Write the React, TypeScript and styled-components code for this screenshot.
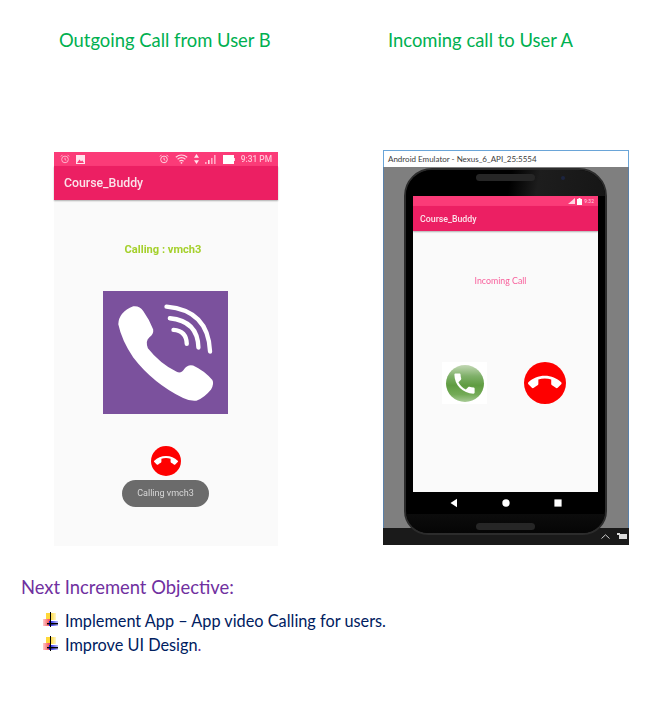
import React from "react";
import styled, { createGlobalStyle } from "styled-components";

const Global = createGlobalStyle`
  html, body { margin: 0; padding: 0; background: #fff; }
  #root { width: 668px; height: 710px; overflow: hidden; }
`;

const Page = styled.main`
  width: 668px;
  height: 710px;
  background: #fff;
  font-family: Lato, "Open Sans", sans-serif;
`;

const TitleRow = styled.div`
  display: grid;
  grid-template-columns: 329px 1fr;
  padding: 28px 0 0 59px;
  height: 150px;
  box-sizing: border-box;
`;

const Title = styled.h2`
  margin: 0;
  font-size: 18.4px;
  line-height: 24px;
  font-weight: 400;
  color: #00b050;
`;

const ShotRow = styled.div`
  display: flex;
  align-items: flex-start;
  padding-left: 54px;
  gap: 105px;
`;

/* ---------- left screenshot ---------- */

const LeftShot = styled.section`
  width: 224px;
  height: 394px;
  margin-top: 2px;
  display: flex;
  flex-direction: column;
  background: #fafafa;
  font-family: Roboto, sans-serif;
`;

const StatusBar = styled.div<{ $h: number }>`
  height: ${(p) => p.$h}px;
  flex: none;
  display: flex;
  align-items: center;
  gap: 6px;
  padding: 0 6px;
  background: #fb3b78;
  color: #ffd0de;
`;

const StatusSpacer = styled.div`
  flex: 1;
`;

const StatusClock = styled.span`
  font-size: 8.4px;
  font-weight: 500;
  color: #ffc4d6;
  filter: blur(0.3px);
`;

const AppBar = styled.header<{ $h: number; $size: number; $pad: number }>`
  height: ${(p) => p.$h}px;
  flex: none;
  display: flex;
  align-items: center;
  padding-left: ${(p) => p.$pad}px;
  background: #ec1f63;
  color: #fbe3ea;
  font-size: ${(p) => p.$size}px;
  font-weight: 500;
  box-shadow: 0 1px 1.5px rgba(0, 0, 0, 0.3);
  filter: blur(0.25px);
`;

const CallBody = styled.div`
  flex: 1;
  display: flex;
  flex-direction: column;
  align-items: center;
  padding-top: 42px;
`;

const CallingText = styled.div`
  height: 16px;
  line-height: 16px;
  margin-right: 6px;
  font-size: 11.1px;
  font-weight: 700;
  color: #a5d02c;
  filter: blur(0.25px);
`;

const ViberTile = styled.div`
  width: 125px;
  height: 123px;
  margin-top: 33px;
  margin-right: 1px;
  background: #7b519d;
  filter: blur(0.3px);
  svg {
    display: block;
    width: 100%;
    height: 100%;
  }
`;

const RoundButton = styled.div<{ $size: number }>`
  width: ${(p) => p.$size}px;
  height: ${(p) => p.$size}px;
  flex: none;
  border-radius: 50%;
  background: #fe0000;
  display: flex;
  align-items: center;
  justify-content: center;
  svg {
    width: 80%;
    height: 80%;
    fill: #fff;
  }
`;

const HangupSlot = styled.div`
  margin-top: 32px;
`;

const Toast = styled.div`
  width: 87px;
  height: 27px;
  margin-top: 4px;
  margin-right: 1px;
  border-radius: 14px;
  background: #6b6b6b;
  color: #d8d8d8;
  font-size: 9px;
  line-height: 27px;
  text-align: center;
  filter: blur(0.25px);
`;

/* ---------- right screenshot ---------- */

const EmulatorWindow = styled.section`
  width: 246px;
  height: 395px;
  display: flex;
  flex-direction: column;
  box-sizing: border-box;
  font-family: Roboto, sans-serif;
`;

const WindowTitle = styled.div`
  height: 17px;
  flex: none;
  box-sizing: border-box;
  border: 1px solid #6aa5d8;
  border-bottom: none;
  background: #fff;
  padding-left: 4px;
  font-family: Lato, sans-serif;
  font-size: 8px;
  line-height: 16px;
  color: #3c3c3c;
  white-space: nowrap;
`;

const Stage = styled.div`
  height: 361px;
  flex: none;
  background: #7f7f7f;
  border-left: 1px solid #5a80a8;
  border-right: 1px solid #5a80a8;
  box-sizing: border-box;
  display: flex;
  justify-content: center;
  padding-right: 1px;
`;

const PhoneBody = styled.div`
  position: relative;
  z-index: 1;
  width: 203px;
  height: 367px;
  margin-top: 1px;
  flex: none;
  box-sizing: border-box;
  border: 2px solid #2c2c2c;
  border-radius: 28px 28px 24px 24px;
  background: #000;
  display: flex;
  flex-direction: column;
  align-items: center;
  overflow: hidden;
`;

const TopBezel = styled.div`
  position: relative;
  align-self: stretch;
  height: 26px;
  flex: none;
  background: linear-gradient(100deg, #000 52%, #1d1d1d 66%, #161616 100%);
  display: flex;
  justify-content: center;
  padding-top: 4px;
  box-sizing: border-box;
`;

const Speaker = styled.div`
  width: 59px;
  height: 7px;
  border-radius: 4px;
  background: #262626;
`;

const Camera = styled.div`
  position: absolute;
  top: 6px;
  left: 155px;
  width: 4px;
  height: 4px;
  border-radius: 50%;
  background: #1c2440;
`;

const Screen = styled.div`
  width: 185px;
  height: 296px;
  flex: none;
  background: #fafafa;
  display: flex;
  flex-direction: column;
`;

const MiniStatus = styled.div`
  height: 10px;
  flex: none;
  background: #fb3b78;
  display: flex;
  align-items: center;
  justify-content: flex-end;
  gap: 2px;
  padding-right: 4px;
  color: #fff;
`;

const MiniClock = styled.span`
  font-size: 5px;
  color: #ffd5e2;
`;

const IncomingText = styled.div`
  margin-top: 44px;
  margin-right: 10px;
  height: 12px;
  line-height: 12px;
  text-align: center;
  font-family: Lato, sans-serif;
  font-size: 8.8px;
  color: #f8609c;
  filter: blur(0.25px);
`;

const AnswerRow = styled.div`
  display: flex;
  align-items: center;
  margin-top: 75px;
  padding-left: 29px;
  gap: 37px;
`;

const AnswerTile = styled.div`
  width: 45px;
  height: 42px;
  background: #fff;
  display: flex;
  align-items: center;
  justify-content: center;
`;

const AnswerDisc = styled.div`
  width: 38px;
  height: 37px;
  border-radius: 50%;
  background: linear-gradient(180deg, #c3d8b5 0%, #7fb069 30%, #5f9c41 55%, #74ab58 80%, #a8cb96 100%);
  display: flex;
  align-items: center;
  justify-content: center;
  svg {
    width: 27px;
    height: 27px;
    fill: #fff;
  }
`;

const NavBar = styled.div`
  align-self: stretch;
  height: 22px;
  flex: none;
  display: flex;
  align-items: center;
  justify-content: center;
  gap: 40px;
  svg {
    display: block;
    width: 12px;
    height: 12px;
    fill: #fff;
  }
`;

const BottomBezel = styled.div`
  align-self: stretch;
  flex: 1;
  background: linear-gradient(180deg, #0c0c0c, #050505);
  display: flex;
  justify-content: center;
  padding-top: 9px;
  box-sizing: border-box;
`;

const TaskBar = styled.div`
  height: 17px;
  flex: none;
  background: #1a1a1a;
  display: flex;
  align-items: center;
  justify-content: flex-end;
  gap: 7px;
  padding-right: 2px;
  svg {
    display: block;
  }
`;

/* ---------- objectives ---------- */

const Objectives = styled.section`
  padding: 29px 0 0 21px;
`;

const ObjectiveTitle = styled.h3`
  margin: 0;
  font-size: 18.4px;
  line-height: 24px;
  font-weight: 400;
  color: #7030a0;
`;

const ObjectiveList = styled.ul`
  list-style: none;
  margin: 9px 0 0;
  padding: 0 0 0 22px;
`;

const ObjectiveItem = styled.li`
  display: flex;
  align-items: center;
  gap: 6px;
  height: 24px;
  font-size: 16.3px;
  color: #002060;
  white-space: nowrap;
`;

const Dot = styled.span`
  color: #7030a0;
`;

const HANG_UP =
  "M12 9c-1.6 0-3.15.25-4.6.72v3.1c0 .39-.23.74-.56.9-.98.49-1.87 1.12-2.66 1.85-.18.18-.43.28-.7.28-.28 0-.53-.11-.71-.29L.29 13.08c-.18-.17-.29-.42-.29-.7 0-.28.11-.53.29-.71C3.34 8.78 7.46 7 12 7s8.66 1.78 11.71 4.67c.18.18.29.43.29.71 0 .28-.11.53-.29.71l-2.48 2.48c-.18.18-.43.29-.71.29-.27 0-.52-.11-.7-.28-.79-.74-1.69-1.36-2.67-1.85-.33-.16-.56-.5-.56-.9v-3.1C15.15 9.25 13.6 9 12 9z";
const CALL =
  "M6.62 10.79c1.44 2.83 3.76 5.14 6.59 6.59l2.2-2.2c.27-.27.67-.36 1.02-.24 1.12.37 2.33.57 3.57.57.55 0 1 .45 1 1V20c0 .55-.45 1-1 1-9.39 0-17-7.61-17-17 0-.55.45-1 1-1h3.5c.55 0 1 .45 1 1 0 1.25.2 2.45.57 3.57.11.35.03.74-.25 1.02l-2.2 2.2z";

const HangUpIcon = () => (
  <svg viewBox="0 0 24 24">
    <path d={HANG_UP} />
  </svg>
);

const ViberLogo = () => (
  <svg viewBox="40 32 374 370">
    <path
      d="M130 78 Q150 76 160 92 Q180 120 190 148 Q192 162 178 172 Q166 182 174 204 Q210 250 262 276 Q276 280 284 266 Q294 252 310 256 Q345 272 368 300 Q374 312 364 328 Q345 352 320 362 Q300 364 280 354 Q190 310 130 232 Q95 180 85 132 Q86 96 130 78 Z"
      fill="#fff"
    />
    <g fill="none" stroke="#fff" strokeWidth="13" strokeLinecap="round">
      <path d="M230 79 Q356 90 361 214" />
      <path d="M240 114 Q324 122 326 202" />
      <path d="M251 149 Q290 152 291 191" />
    </g>
  </svg>
);

const AlarmIcon = ({ size, color }: { size: number; color: string }) => (
  <svg width={size} height={size} viewBox="0 0 12 12" fill="none" stroke={color} strokeWidth="1.2">
    <circle cx="6" cy="6.5" r="4" />
    <path d="M6 4.5V6.8L7.5 7.5M1 3L3 1M11 3L9 1" />
  </svg>
);

const PictureIcon = () => (
  <svg width="9" height="9" viewBox="0 0 9 9">
    <rect width="9" height="9" fill="#ffe3ec" />
    <path d="M1 8L3.5 4.5L5 6.5L6.2 5.2L8 8Z" fill="#fb3b78" />
  </svg>
);

const WifiIcon = () => (
  <svg width="13" height="10" viewBox="0 0 13 10" fill="none" stroke="#ffd8e4" strokeWidth="1.2">
    <path d="M.8 3.2Q6.5-1.2 12.2 3.2M2.6 5.2Q6.5 2.2 10.4 5.2M4.4 7.2Q6.5 5.6 8.6 7.2" />
    <circle cx="6.5" cy="8.8" r=".9" fill="#ffd8e4" stroke="none" />
  </svg>
);

const DataArrows = () => (
  <svg width="5" height="10" viewBox="0 0 5 10" fill="#ffe3ec">
    <path d="M2.5 0L5 3.8H0ZM2.5 10L0 6.2H5Z" />
  </svg>
);

const SignalIcon = () => (
  <svg width="12" height="9" viewBox="0 0 12 9" fill="#ffa9c4">
    <rect x="0" y="7" width="1.6" height="2" />
    <rect x="3" y="5" width="1.6" height="4" fill="#ffd8e4" />
    <rect x="6" y="3" width="1.6" height="6" />
    <rect x="9" y="0" width="1.6" height="9" />
  </svg>
);

const BatteryIcon = () => (
  <svg width="12" height="9" viewBox="0 0 12 9">
    <rect width="11" height="9" fill="#fff" />
    <rect x="11" y="3" width="1" height="3" fill="#ffd8e4" />
  </svg>
);

const MiniSignal = () => (
  <svg width="7" height="6" viewBox="0 0 7 6" fill="#ffd5e2">
    <path d="M7 0V6H0Z" />
  </svg>
);

const MiniBattery = () => (
  <svg width="5" height="7" viewBox="0 0 5 7" fill="#fff">
    <rect y="1" width="5" height="6" />
    <rect x="1.5" width="2" height="1" />
  </svg>
);

const Bullet = () => (
  <svg width="16" height="16" viewBox="0 0 16 16" style={{ flex: "none" }}>
    <defs>
      <linearGradient id="yellowFade" x1="0" x2="1" y1="0" y2="0">
        <stop offset="0.45" stopColor="#ffd83a" />
        <stop offset="1" stopColor="#fff6c8" />
      </linearGradient>
      <linearGradient id="redFade" x1="0" x2="1" y1="0" y2="0">
        <stop offset="0" stopColor="#ffc8c8" />
        <stop offset="1" stopColor="#f4474e" />
      </linearGradient>
      <linearGradient id="blueFade" x1="0" x2="1" y1="0" y2="0">
        <stop offset="0" stopColor="#1010e0" />
        <stop offset="1" stopColor="#c4c4ff" />
      </linearGradient>
    </defs>
    <rect x="3" y="1" width="10" height="7" fill="url(#yellowFade)" />
    <rect x="0" y="7" width="7" height="7" fill="url(#redFade)" />
    <rect x="6" y="9" width="9" height="5" fill="url(#blueFade)" />
    <rect x="7" y="0" width="1" height="15" fill="#000" />
    <rect x="4" y="11" width="11" height="1.4" fill="#000" />
  </svg>
);

export default function App() {
  return (
    <Page>
      <Global />
      <TitleRow>
        <Title>Outgoing Call from User B</Title>
        <Title>Incoming call to User A</Title>
      </TitleRow>

      <ShotRow>
        <LeftShot>
          <StatusBar $h={14}>
            <AlarmIcon size={10} color="#ffb3cb" />
            <PictureIcon />
            <StatusSpacer />
            <AlarmIcon size={10} color="#ffd0de" />
            <WifiIcon />
            <DataArrows />
            <SignalIcon />
            <BatteryIcon />
            <StatusClock>9:31 PM</StatusClock>
          </StatusBar>
          <AppBar $h={34} $size={12.3} $pad={10}>
            Course_Buddy
          </AppBar>
          <CallBody>
            <CallingText>Calling : vmch3</CallingText>
            <ViberTile>
              <ViberLogo />
            </ViberTile>
            <HangupSlot>
              <RoundButton $size={30}>
                <HangUpIcon />
              </RoundButton>
            </HangupSlot>
            <Toast>Calling vmch3</Toast>
          </CallBody>
        </LeftShot>

        <EmulatorWindow>
          <WindowTitle>Android Emulator - Nexus_6_API_25:5554</WindowTitle>
          <Stage>
            <PhoneBody>
              <TopBezel>
                <Speaker />
                <Camera />
              </TopBezel>
              <Screen>
                <MiniStatus>
                  <MiniSignal />
                  <MiniBattery />
                  <MiniClock>9:32</MiniClock>
                </MiniStatus>
                <AppBar $h={25} $size={8.8} $pad={7}>
                  Course_Buddy
                </AppBar>
                <IncomingText>Incoming Call</IncomingText>
                <AnswerRow>
                  <AnswerTile>
                    <AnswerDisc>
                      <svg viewBox="0 0 24 24">
                        <path d={CALL} />
                      </svg>
                    </AnswerDisc>
                  </AnswerTile>
                  <RoundButton $size={42}>
                    <HangUpIcon />
                  </RoundButton>
                </AnswerRow>
              </Screen>
              <NavBar>
                <svg viewBox="0 0 12 12">
                  <path d="M2.5 6L9 1.8V10.2Z" />
                </svg>
                <svg viewBox="0 0 12 12">
                  <circle cx="6" cy="6" r="3.7" />
                </svg>
                <svg viewBox="0 0 12 12">
                  <rect x="2.4" y="2.4" width="7.2" height="7.2" />
                </svg>
              </NavBar>
              <BottomBezel>
                <Speaker />
              </BottomBezel>
            </PhoneBody>
          </Stage>
          <TaskBar>
            <svg width="9" height="5" viewBox="0 0 9 5" fill="none" stroke="#cfcfcf" strokeWidth="1">
              <path d="M.5 4.5L4.5 .8L8.5 4.5" />
            </svg>
            <svg width="10" height="7" viewBox="0 0 10 7" fill="#dcdcdc">
              <rect x="2" y="1" width="8" height="5" />
              <rect y="0" width="3" height="2" />
            </svg>
          </TaskBar>
        </EmulatorWindow>
      </ShotRow>

      <Objectives>
        <ObjectiveTitle>Next Increment Objective:</ObjectiveTitle>
        <ObjectiveList>
          <ObjectiveItem>
            <Bullet />
            <span>Implement App – App video Calling for users.</span>
          </ObjectiveItem>
          <ObjectiveItem>
            <Bullet />
            <span>
              Improve UI Design<Dot>.</Dot>
            </span>
          </ObjectiveItem>
        </ObjectiveList>
      </Objectives>
    </Page>
  );
}
